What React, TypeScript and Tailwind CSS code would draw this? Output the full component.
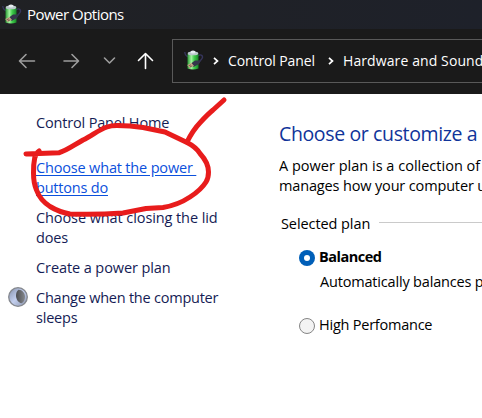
import type { ReactNode } from 'react';

function BatteryIcon({ className }: { className: string }) {
  return (
    <svg viewBox="0 0 20 20" className={className} aria-hidden="true">
      <defs>
        <linearGradient id="cell" x1="0" x2="1">
          <stop offset="0" stopColor="#2a9a35" />
          <stop offset="0.35" stopColor="#a2f4a0" />
          <stop offset="0.6" stopColor="#43d04d" />
          <stop offset="1" stopColor="#168526" />
        </linearGradient>
      </defs>
      <path d="M0.800 2C1 5 2 6.500 5 7M14 6C17 3.500 19.500 6 18 8.500C17 10.500 15 11 15 13" fill="none" stroke="#36355c" strokeWidth="1.400" />
      <path d="M3.500 4Q9 1.500 14.500 4V18.500Q9 20.500 3.500 18.500Z" fill="url(#cell)" />
      <ellipse cx="9" cy="3.400" rx="5.300" ry="1.900" fill="#b9c8cb" />
      <ellipse cx="9" cy="2" rx="2.700" ry="1.500" fill="#e6edf0" />
      <path d="M7 13.500L11 10.500L17 10.500L15 14L9.500 17Z" fill="#34364b" />
      <path d="M3.200 15L7.500 13L10 16L5.500 18Z" fill="#c9a98a" />
      <path d="M4.500 15.800L7 14.800M5.800 17L8.300 15.800" stroke="#59483e" strokeWidth="0.700" />
    </svg>
  );
}

function MoonIcon() {
  return (
    <svg viewBox="0 0 20 20" className="-mt-px size-5 shrink-0" aria-hidden="true">
      <defs>
        <linearGradient id="moon" x1="0" x2="1" y1="0" y2="1">
          <stop offset="0" stopColor="#8490ac" />
          <stop offset="0.5" stopColor="#c3cfee" />
          <stop offset="1" stopColor="#8791aa" />
        </linearGradient>
        <linearGradient id="shade" x1="0" x2="1">
          <stop offset="0" stopColor="#4c4d50" />
          <stop offset="1" stopColor="#85888d" />
        </linearGradient>
      </defs>
      <circle cx="10" cy="10" r="9.300" fill="url(#moon)" stroke="#85888e" strokeWidth="1.300" />
      <path d="M10.500 2.700C14.500 2.700 17 6 17 10C17 13 15.500 15.300 13.700 16.300C10 15.500 8 12 8 8.500C8 6 9 3.700 10.500 2.700Z" fill="url(#shade)" />
    </svg>
  );
}

function Chevron() {
  return (
    <svg viewBox="0 0 6 8" className="h-2 w-1.5 shrink-0" aria-hidden="true">
      <path d="M1 0.800L4.500 4L1 7.200" fill="none" stroke="#fff" strokeWidth="1.700" />
    </svg>
  );
}

function Line({ className = '', children }: { className?: string; children: ReactNode }) {
  return <span className={`block h-5 whitespace-pre ${className}`}>{children}</span>;
}

function TitleBar() {
  return (
    <header className="flex h-[29px] items-center bg-gradient-to-r from-[#202124] to-[#1e212a] pl-0.5 text-white">
      <BatteryIcon className="mt-[-2px] size-5" />
      <h1 className="-mt-px ml-[5px] text-[15px] leading-5 tracking-[-0.520px]">Power Options</h1>
    </header>
  );
}

function NavBar() {
  return (
    <nav className="flex h-[65px] items-start bg-[#1a1a1a] pt-[10px] text-white">
      <svg viewBox="0 0 172 44" className="h-11 w-[172px] shrink-0" fill="none" strokeWidth="1.600" strokeLinecap="round" strokeLinejoin="round" aria-hidden="true">
        <path d="M34.500 22H20M26 15.500L19.500 22L26 28.500M64 22H78M72 15.500L78.500 22L72 28.500M104.500 19L109.500 24L114.500 19" stroke="#9d9d9d" />
        <path d="M145.500 29.500V15M138.500 21.500L145.500 14.500L152.500 21.500" stroke="#fff" />
      </svg>
      <div className="flex h-11 flex-1 items-center border border-r-0 border-[#595959] pl-[11px]">
        <BatteryIcon className="mt-[-2px] size-5 shrink-0" />
        <div className="ml-[9px] flex items-center text-[14px] leading-5 whitespace-nowrap">
          <Chevron />
          <span className="ml-[9px] w-[100px] tracking-[-0.110px]">Control Panel</span>
          <Chevron />
          <span className="ml-[9px] tracking-[0.100px]">Hardware and Sound</span>
        </div>
      </div>
    </nav>
  );
}

function Sidebar() {
  return (
    <aside className="w-[279px] shrink-0 pt-[19px] pl-9 text-[#151c55]">
      <Line className="tracking-[-0.170px]">Control Panel Home</Line>
      <a className="mt-[25px] block text-[#0b50dc]">
        <Line className="tracking-[-0.170px] underline underline-offset-2">{'Choose what the power '}</Line>
        <Line className="tracking-[-0.200px] underline underline-offset-2">buttons do</Line>
      </a>
      <a className="mt-2.5 block">
        <Line className="tracking-[-0.090px]">Choose what closing the lid</Line>
        <Line className="tracking-[-0.200px]">does</Line>
      </a>
      <Line className="mt-2.5 tracking-[-0.090px]">Create a power plan</Line>
      <div className="mt-2.5 -ml-7 flex gap-2">
        <MoonIcon />
        <a>
          <Line className="tracking-[-0.230px]">Change when the computer</Line>
          <Line className="tracking-[-0.200px]">sleeps</Line>
        </a>
      </div>
    </aside>
  );
}

function PlanPanel() {
  return (
    <section className="min-w-0 flex-1 overflow-hidden pt-[26px] whitespace-nowrap text-black">
      <h2 className="h-7 text-[19.500px] leading-7 tracking-[-0.370px] text-[#10349a]">Choose or customize a</h2>
      <p className="mt-2">
        <Line className="tracking-[0.010px]">A power plan is a collection of</Line>
        <Line className="tracking-[-0.150px]">manages how your computer u</Line>
      </p>
      <div className="mt-[18px] flex h-5 pl-0.5">
        <Line className="w-[98px] shrink-0 tracking-[-0.080px]">Selected plan</Line>
        <div className="mt-2 h-px flex-1 bg-[#cacaca]" />
      </div>
      <div className="mt-[13px] flex pl-5">
        <span className="mt-[3px] flex size-4 shrink-0 items-center justify-center rounded-full bg-[#005fb8]">
          <span className="size-1.5 rounded-full bg-white" />
        </span>
        <Line className="ml-1 font-bold tracking-[-0.500px]">Balanced</Line>
      </div>
      <Line className="mt-[5px] pl-[41px] tracking-[-0.180px]">Automatically balances p</Line>
      <div className="mt-[23px] flex pl-5">
        <span className="mt-[3px] size-4 shrink-0 rounded-full border border-[#858585] bg-[#f3f3f3]" />
        <Line className="ml-1 tracking-[-0.230px]">High Perfomance</Line>
      </div>
    </section>
  );
}

export default function App() {
  return (
    <div className="relative h-[418px] w-[482px] overflow-hidden bg-white font-['Open_Sans','Noto_Sans',sans-serif]">
      <TitleBar />
      <NavBar />
      <main className="flex text-[14.500px] leading-5">
        <Sidebar />
        <PlanPanel />
      </main>
      <svg viewBox="0 0 482 418" className="pointer-events-none absolute inset-0 h-full w-full" fill="none" stroke="#e81c1c" strokeWidth="5" strokeLinecap="round" strokeLinejoin="round" aria-hidden="true">
        <path d="M26 154L59 152.700C66 151 74 145 83 140C92 136 98 130 107 127Q111 125.500 117 125.500Q130 125.500 143 127.500L165 132L187 142.500Q196 147 200 153.500C206 160 208.500 165 208.500 172Q208.500 178 206 182Q201 190 190 197Q178 205 163 207.500L146 208.500L123 213Q95 215 70 214Q59 212 50 206.500Q40 200 36.500 190Q33.500 183 33.500 173Q33.300 165 34.700 158Q36 153 39 151" />
        <path d="M187 142Q193 130 200 122.700Q208 114 213 110L224 100" />
      </svg>
    </div>
  );
}
